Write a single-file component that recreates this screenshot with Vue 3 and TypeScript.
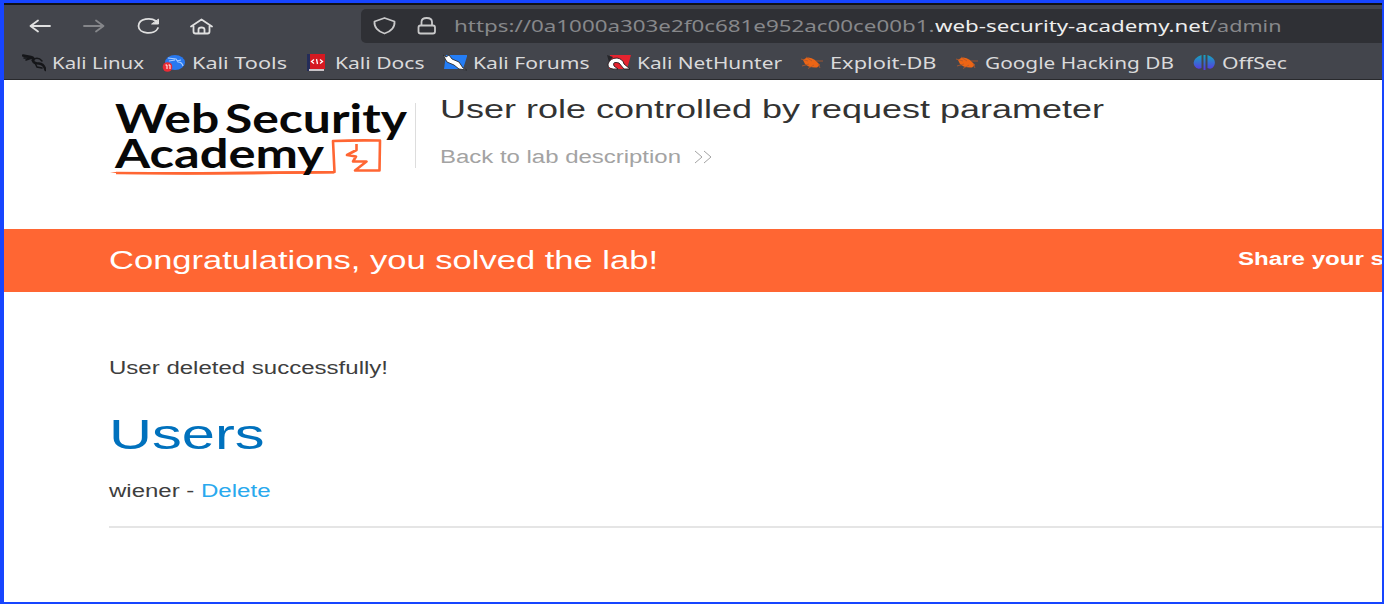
<script setup lang="ts">
interface Bookmark { id: string; label: string; width: number }

const bookmarks: Bookmark[] = [
  { id: 'linux', label: 'Kali Linux', width: 92 },
  { id: 'tools', label: 'Kali Tools', width: 95 },
  { id: 'docs', label: 'Kali Docs', width: 89.5 },
  { id: 'forums', label: 'Kali Forums', width: 116.5 },
  { id: 'hunter', label: 'Kali NetHunter', width: 145 },
  { id: 'bug', label: 'Exploit-DB', width: 106.5 },
  { id: 'bug', label: 'Google Hacking DB', width: 189 },
  { id: 'offsec', label: 'OffSec', width: 65 },
]

/* Stretches a line of text horizontally to the given width in pixels. */
const vFit = {
  mounted(el: HTMLElement, binding: { value: number }) {
    const natural = el.getBoundingClientRect().width
    el.style.transform = `scaleX(${binding.value / natural})`
    el.style.marginRight = `${binding.value - natural}px`
  },
}
</script>

<template>
  <div class="frame">
    <header class="browser">
      <div class="toolbar">
        <svg class="nav" width="220" height="50" viewBox="0 0 220 50" fill="none" stroke="#e0e0e0" stroke-width="1.800" stroke-linecap="round" stroke-linejoin="round">
          <path d="M46 21H27M34 15.500L26.500 21L34 26.500" />
          <path d="M80 21H99M92 15.500L99.500 21L92 26.500" stroke="#85868a" />
          <path d="M152 16C147 12.500 135 13 134.500 21C134.500 29.500 151 30 154 23" />
          <path d="M154.500 14.500V19H148Z" fill="#e0e0e0" stroke-width="1" />
          <path d="M187 21.500L197.500 14.500L208 21.500M189.500 21V26.500Q189.500 28.500 191.500 28.500H203.500Q205.500 28.500 205.500 26.500V21M194.500 28V24.500Q194.500 22.500 197.500 22.500Q200.500 22.500 200.500 24.500V28" />
        </svg>
        <div class="address">
          <svg width="90" height="34" viewBox="0 0 90 34" fill="none" stroke="#c9c9ca" stroke-width="1.800" stroke-linejoin="round">
            <path d="M23.500 9L33.500 12.500C34 18 30 22.500 23.500 24.500C17 22.500 13 18 13.500 12.500Z" />
            <rect x="57.500" y="16.500" width="16.500" height="8" rx="2" /><path d="M60.500 16.500V13Q60.500 9 65.700 9Q71 9 71 13V16.500" />
          </svg>
          <span v-fit="480.5" class="url">https://0a1000a303e2f0c681e952ac00ce00b1.</span><span v-fit="274" class="url domain">web-security-academy.net</span><span v-fit="72.5" class="url">/admin</span>
        </div>
      </div>
      <nav class="bookmarks">
        <span v-for="item in bookmarks" :key="item.label" class="bookmark">
          <svg class="favicon" width="24" height="18" viewBox="0 0 24 18">
            <g v-if="item.id === 'linux'" fill="none" stroke="#151619" stroke-linecap="round">
              <path d="M1 1.500L9 3Q13 4 11 7Q12 9.500 17 9.500Q22 10 23.500 16" stroke-width="2.400" />
              <path d="M2 4L10 4M4 6L10 4M10 6Q16 2 20 7M13 9L15 13L20 14" stroke-width="1.500" />
            </g>
            <g v-else-if="item.id === 'tools'">
              <ellipse cx="13" cy="8.500" rx="10" ry="7.500" fill="#2878ef" />
              <path d="M6 4L14 5L16 8Q20 8 21 12M7 7L13 6M15 7L19 6" fill="none" stroke="#a9cdff" stroke-width="1.200" />
              <circle cx="5.500" cy="13" r="4.800" fill="#e92b35" />
              <path d="M3.500 11H5V15M6.500 11H8V15" fill="none" stroke="#fff" />
            </g>
            <g v-else-if="item.id === 'docs'">
              <path d="M2 0H20V15H4V17H2Z" fill="#d51921" /><path d="M2 0H5V17H2Z" fill="#242c59" /><path d="M4 15H19V17H4Z" fill="#c9c4c8" />
              <path d="M9 5.500L6.500 7.500L9 9.500M15 5.500L17.500 7.500L15 9.500M11.500 5L12.500 10" fill="none" stroke="#fff" stroke-width="1.300" />
            </g>
            <g v-else-if="item.id === 'forums'">
              <path d="M3 1H24.500L20 15H1Z" fill="#247df5" />
              <path d="M0 1L3 3L6 1L9 5L16 8L20 14L24 16L16 15L11 11L4 8Z" fill="#fff" stroke="#292b30" stroke-width="0.900" />
            </g>
            <g v-else-if="item.id === 'hunter'">
              <path d="M3 1H24L20 15H2Z" fill="#e5232f" />
              <path d="M0 1L6 3L2 8Z" fill="#25262a" />
              <path d="M1 10Q3 4 10 4Q16 5 17 10L23 15H17L12 9Q5 7 7 12L11 15Q0 16 1 10Z" fill="#fff" stroke="#2a1a1e" stroke-width="0.900" />
            </g>
            <g v-else-if="item.id === 'bug'">
              <path d="M3 6Q8 1 15 6L20 11L17 13.500Q9 14 5 10Z" fill="#ed6515" />
              <path d="M1 5L8 7M2 12L9 10M6 3L12 7M8 14.500L14 11M16 7L23 7M18 10L20 14" stroke="#b5592a" stroke-width="0.800" />
            </g>
            <g v-else>
              <defs><linearGradient id="brand" x1="0" y1="0" x2="0" y2="1"><stop stop-color="#14a6bd" /><stop offset="1" stop-color="#5b35e3" /></linearGradient></defs>
              <path d="M9.500 1V14Q5 16 2.500 12Q-1 5 9.500 1ZM15.500 1V14Q20 16 22 12Q25.500 5 15.500 1ZM11.500 1H13.500V16H11.500Z" fill="url(#brand)" />
            </g>
          </svg>
          <span v-fit="item.width" class="label">{{ item.label }}</span>
        </span>
      </nav>
    </header>
    <section class="intro">
      <div class="logo">
        <svg class="drawing" width="300" height="80" viewBox="0 0 300 80" fill="none" stroke="#ff6633">
          <path d="M5 75Q110 76 223.500 74L222 43Q245 42 269 42.500L268.500 72.500H244L255.500 63.500H242L245 58.500L236 57L245.500 52V46" stroke-width="2.600" stroke-linejoin="round" />
          <path d="M-1 74L90 74L223 73V75.500L100 76.500L10 76Z" fill="#ff6633" stroke="none" />
        </svg>
        <div class="words"><span v-fit="292" class="word">Web Security</span><span v-fit="209" class="word">Academy</span></div>
      </div>
      <div class="details">
        <div class="line"><span v-fit="664" class="title">User role controlled by request parameter</span></div>
        <div class="line back"><span v-fit="241" class="backtext">Back to lab description</span>
          <svg width="18" height="14" viewBox="0 0 18 14" fill="none" stroke="#a3a3a3"><path d="M1 1L8 7L1 13M10 1L17 7L10 13" /></svg>
        </div>
      </div>
    </section>
    <section class="banner">
      <span v-fit="549" class="congrats">Congratulations, you solved the lab!</span>
      <span v-fit="146" class="share">Share your s</span>
    </section>
    <main class="content">
      <div><span v-fit="279" class="body">User deleted successfully!</span></div>
      <h1><span v-fit="155.5" class="users">Users</span></h1>
      <div class="userrow"><span v-fit="92" class="body">wiener -&nbsp;</span><a v-fit="69.5" class="body delete">Delete</a></div>
      <hr>
    </main>
  </div>
</template>

<style>
html, body { margin: 0; overflow: hidden; }
</style>
<style scoped>
.frame { box-sizing: border-box; width: 1384px; height: 604px; overflow: hidden; border: solid #1745ff; border-width: 3px 2px 2px 4px; background: #fff; font-family: "Liberation Sans", Arial, sans-serif; color: #3e3e3e; }
.frame span, .frame a { white-space: nowrap; }
.url, .label, .word, .title, .backtext, .congrats, .share, .body, .users { display: inline-block; flex: none; transform-origin: left center; }
.browser { box-sizing: border-box; height: 77px; border-top: 2px solid #101218; border-bottom: 1px solid #28292c; background: #43454c; font-family: "Noto Sans", "Open Sans", sans-serif; }
.toolbar { display: flex; height: 42px; }
.nav { width: 220px; flex: none; margin-right: 137px; }
.address { display: flex; align-items: center; height: 34px; margin-top: 4px; flex: 1; border-radius: 5px 0 0 5px; background: #2f3035; overflow: hidden; }
.address svg { flex: none; margin-right: 3px; }
.url { font-size: 17px; line-height: 32px; color: #87888b; }
.domain { color: #ededed; }
.bookmarks { display: flex; height: 32px; gap: 18px; padding-left: 18px; }
.bookmark { display: flex; align-items: center; gap: 6px; height: 32px; }
.favicon { flex: none; }
.label { font-size: 16.5px; line-height: 28px; color: #dadadb; }
.intro { display: flex; height: 149px; }
.logo { position: relative; width: 304px; margin: 23px 0 0 107px; height: 65px; border-right: 1px solid #ddd; }
.drawing { position: absolute; left: 0; top: -5px; overflow: visible; }
.words { position: relative; display: flex; flex-direction: column; align-items: flex-start; margin: -2px 0 0 4px; font-family: Lato, sans-serif; font-weight: 700; font-size: 39.5px; word-spacing: -5px; color: #080808; }
.word { line-height: 34.5px; }
.details { padding: 13px 0 0 24px; }
.line { display: flex; align-items: center; height: 32px; }
.title { font-size: 26.5px; color: #333; }
.back { margin-top: 16px; gap: 13px; color: #a3a3a3; }
.backtext { font-size: 18px; }
.banner { display: flex; align-items: center; justify-content: space-between; height: 63px; padding-left: 105px; background: #ff6633; color: #fff; overflow: hidden; }
.congrats { font-size: 26.5px; line-height: 30px; padding-bottom: 1px; }
.share { margin-left: auto; position: relative; left: 2px; font-size: 18px; line-height: 24px; padding-bottom: 4px; font-weight: 700; }
.content { padding: 64px 0 0 105px; }
.body { font-size: 18px; line-height: 24px; }
h1 { margin: 31px 0 0; font-size: 42px; line-height: 48px; font-weight: 400; color: #0071bd; }
.userrow { display: flex; margin-top: 20px; }
.delete { color: #29a9ee; }
hr { height: 2px; margin: 23px 0 0; border: 0; background: #e5e5e5; }
</style>
